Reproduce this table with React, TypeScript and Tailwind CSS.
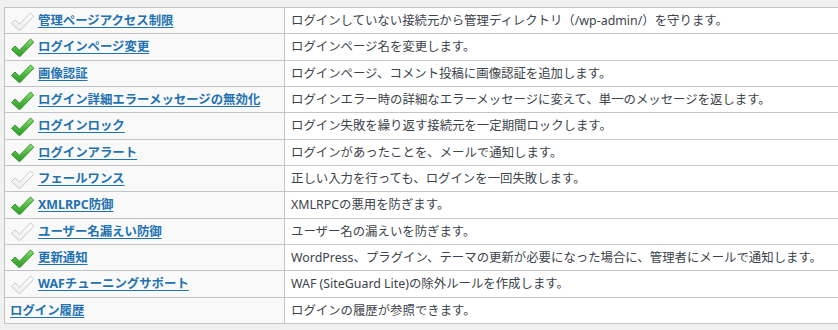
import React from "react";

type Row = { name: string; desc: string; state: "on" | "off" | "none" };

const rows: Row[] = [
  { name: "管理ページアクセス制限", desc: "ログインしていない接続元から管理ディレクトリ（/wp-admin/）を守ります。", state: "off" },
  { name: "ログインページ変更", desc: "ログインページ名を変更します。", state: "on" },
  { name: "画像認証", desc: "ログインページ、コメント投稿に画像認証を追加します。", state: "on" },
  { name: "ログイン詳細エラーメッセージの無効化", desc: "ログインエラー時の詳細なエラーメッセージに変えて、単一のメッセージを返します。", state: "on" },
  { name: "ログインロック", desc: "ログイン失敗を繰り返す接続元を一定期間ロックします。", state: "on" },
  { name: "ログインアラート", desc: "ログインがあったことを、メールで通知します。", state: "on" },
  { name: "フェールワンス", desc: "正しい入力を行っても、ログインを一回失敗します。", state: "off" },
  { name: "XMLRPC防御", desc: "XMLRPCの悪用を防ぎます。", state: "on" },
  { name: "ユーザー名漏えい防御", desc: "ユーザー名の漏えいを防ぎます。", state: "off" },
  { name: "更新通知", desc: "WordPress、プラグイン、テーマの更新が必要になった場合に、管理者にメールで通知します。", state: "on" },
  { name: "WAFチューニングサポート", desc: "WAF (SiteGuard Lite)の除外ルールを作成します。", state: "off" },
  { name: "ログイン履歴", desc: "ログインの履歴が参照できます。", state: "none" },
];

function Check({ on }: { on: boolean }) {
  const id = on ? "gOn" : "gOff";
  return (
    <svg width="25" height="21" viewBox="0 0 25 21" className="shrink-0">
      <defs>
        <linearGradient id={id} x1="0" y1="0" x2="0" y2="1">
          {on ? (
            <>
              <stop offset="0" stopColor="#8ee07a" />
              <stop offset="0.5" stopColor="#4cbb3f" />
              <stop offset="1" stopColor="#2f9a2a" />
            </>
          ) : (
            <>
              <stop offset="0" stopColor="#ffffff" />
              <stop offset="1" stopColor="#ececec" />
            </>
          )}
        </linearGradient>
      </defs>
      <path
        d="M1.5 12.5 L5 9 L9.5 13.2 L20.5 2 L23.8 5.2 L10.5 19 Q9.5 20 8.5 19 Z"
        fill={`url(#${id})`}
        stroke={on ? "#3b8f33" : "#c9c9c9"}
        strokeWidth="1"
        strokeLinejoin="round"
      />
    </svg>
  );
}

export default function App() {
  return (
    <div
      className="w-[838px] h-[330px] overflow-hidden bg-[#f0f0f1] pt-[7px] pl-[4px]"
      style={{ fontFamily: '"Noto Sans", "Noto Sans CJK JP", sans-serif' }}
    >
      <table className="w-[900px] border-collapse border border-[#c3c4c7] text-[12.4px] leading-[18px]">
        <tbody>
          {rows.map((r) => (
            <tr key={r.name} className="h-[26.33px]">
              <td className="w-[280px] border border-[#c3c4c7] bg-[#f9f9f9] pl-[5px] pt-[1px] pb-0 align-middle">
                <div className="flex items-center gap-[3px]">
                  {r.state !== "none" && <Check on={r.state === "on"} />}
                  <a href="#" className="font-bold text-[#2271b1] underline underline-offset-2 whitespace-nowrap">
                    {r.name}
                  </a>
                </div>
              </td>
              <td className="border border-[#c3c4c7] bg-white pl-[6px] pt-[1px] pb-0 align-middle text-[#3c434a] whitespace-nowrap">
                {r.desc}
              </td>
            </tr>
          ))}
        </tbody>
      </table>
    </div>
  );
}
